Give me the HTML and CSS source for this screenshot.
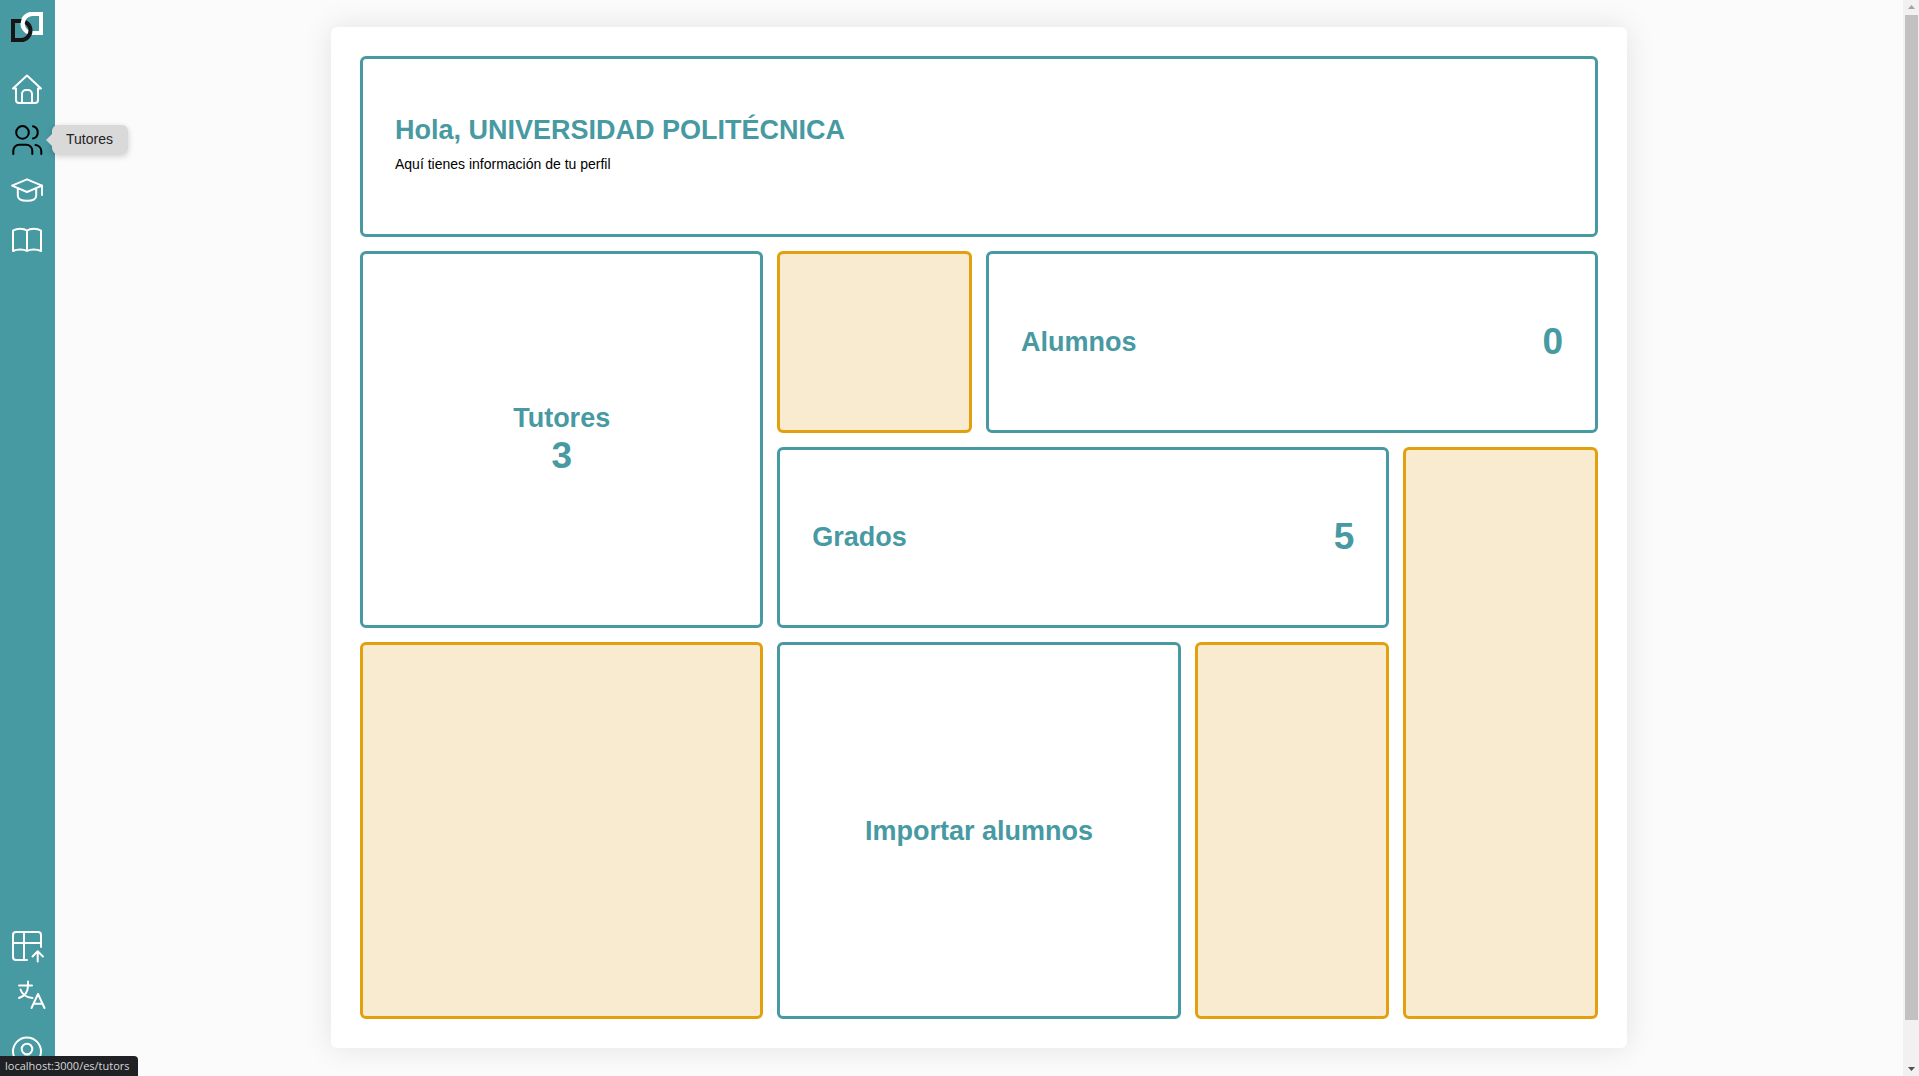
FILE: index.html
```html
<!DOCTYPE html>
<html lang="es">
<head>
    <meta charset="UTF-8">
    <meta name="viewport" content="width=device-width, initial-scale=1.0">
    <title>Perfil</title>
    <link rel="stylesheet" href="styles.css">
</head>
<body>
    <nav class="sidebar">
        <a class="logo" href="/es" aria-label="Inicio">
            <svg class="icon" viewBox="0 0 32 32">
                <path d="M30 3H21a9.500 9.500 0 0 0 0 19h9z" stroke="#fff" stroke-width="4"/>
                <path d="M2 10h8a9.500 9.500 0 0 1 0 19H2z" stroke="#161616" stroke-width="4"/>
                <path d="M21 3a9.500 9.500 0 0 0-8.500 13" stroke="#fff" stroke-width="4"/>
            </svg>
        </a>

        <div class="menu">
            <a href="/es/home" aria-label="Inicio">
                <svg class="icon" viewBox="0 0 32 32">
                    <path d="M2 14.500 16 1.500l14 13M2 14.500h3V26a3 3 0 0 0 3 3h16a3 3 0 0 0 3-3V14.500h3"/>
                    <path d="M11 29v-9a4 4 0 0 1 4-4h2a4 4 0 0 1 4 4v9"/>
                </svg>
            </a>
            <a class="active" href="/es/tutors" aria-label="Tutores">
                <svg class="icon" viewBox="0 0 32 32">
                    <circle cx="11.500" cy="8.400" r="6.300"/>
                    <path d="M22 2.300a6.300 6.300 0 0 1 0 12.200M2.300 30v-3.200a6 6 0 0 1 6-6h7a6 6 0 0 1 6 6V30M24.500 21a6.500 6.500 0 0 1 5.800 6.500V30"/>
                </svg>
                <span class="tooltip">Tutores</span>
            </a>
            <a href="/es/students" aria-label="Alumnos">
                <svg class="icon" viewBox="0 0 32 32">
                    <path d="M16 5.300 31 11.600 16 18 1 11.600zM31 11.600V21M6.800 14v7.500c0 3.500 4 5.300 9.200 5.300s9.200-1.800 9.200-5.300V14"/>
                </svg>
            </a>
            <a href="/es/degrees" aria-label="Grados">
                <svg class="icon" viewBox="0 0 32 32">
                    <path d="M16 6.500C12.500 4.200 6 4.200 2 6.500V27c4-2 10.500-2 14 0 3.500-2 10-2 14 0V6.500c-4-2.300-10.500-2.300-14 0zM16 6.500V27"/>
                </svg>
            </a>
        </div>

        <div class="menu menu-bottom">
            <a href="/es/import" aria-label="Importar">
                <svg class="icon" viewBox="0 0 32 32">
                    <path d="M16 29H5a3 3 0 0 1-3-3V4a3 3 0 0 1 3-3h22a3 3 0 0 1 3 3v12M2 12h28M13 1v28"/>
                    <path d="M26.700 30.500v-10M21.500 25.500l5.200-5.200 5.200 5.200"/>
                </svg>
            </a>
            <a href="/es/language" aria-label="Idioma">
                <svg class="icon" viewBox="0 0 32 32">
                    <path d="M8 4.500h13M17 .500v4c0 6-3 10.500-9 12.500M9.500 8.500c1.500 4.500 5.500 8 12 8.500"/>
                    <path d="m20.500 27 6.500-14 6.500 14M22.500 22.800h9"/>
                </svg>
            </a>
            <a class="account" href="/es/profile" aria-label="Perfil">
                <svg class="icon" viewBox="0 0 32 32">
                    <circle cx="16" cy="16.500" r="14"/>
                    <circle cx="16" cy="14" r="5.300"/>
                    <path d="M7 27c1-4 4.500-5.500 9-5.500s8 1.500 9 5.500"/>
                </svg>
            </a>
        </div>
    </nav>

    <main class="content">
        <div class="panel">
            <section class="box welcome">
                <h1>Hola, UNIVERSIDAD POLITÉCNICA</h1>
                <p>Aquí tienes información de tu perfil</p>
            </section>
            <section class="box tutors">
                <h2>Tutores</h2>
                <span class="number">3</span>
            </section>
            <div class="box filler filler-small"></div>
            <section class="box row students">
                <h2>Alumnos</h2>
                <span class="number">0</span>
            </section>
            <section class="box row degrees">
                <h2>Grados</h2>
                <span class="number">5</span>
            </section>
            <div class="box filler filler-tall"></div>
            <div class="box filler filler-big"></div>
            <button class="box import" type="button">Importar alumnos</button>
            <div class="box filler"></div>
        </div>
    </main>

    <div class="scrollbar">
        <svg viewBox="0 0 16 15"><path d="M5 9h7L8.500 5z" fill="#a3a3a3"/></svg>
        <div class="thumb"></div>
        <svg viewBox="0 0 16 15"><path d="M5 6h7l-3.500 4z" fill="#505050"/></svg>
    </div>

    <div class="status">localhost:3000/es/tutors</div>
</body>
</html>
```

FILE: styles.css
```css
* {
    box-sizing: border-box;
}

body {
    display: flex;
    min-height: 100vh;
    margin: 0;
    background-color: #fbfbfb;
    color: #000;
    font-family: "Liberation Sans", Arial, sans-serif;
    font-size: 14px;
}

h1,
h2,
p {
    margin: 0;
}

/* Sidebar */
.sidebar {
    position: sticky;
    top: 0;
    display: flex;
    flex-direction: column;
    flex-shrink: 0;
    align-items: flex-start;
    width: 55px;
    height: 100vh;
    padding: 11px 12px 9px 11px;
    background-color: #4799a2;
}

.sidebar a {
    position: relative;
    display: block;
    height: 32px;
    color: #fff;
}

.sidebar a.active {
    color: #000;
}

.icon {
    display: block;
    width: 32px;
    height: 32px;
    overflow: visible;
    fill: none;
    stroke: currentColor;
    stroke-width: 2;
}

.menu {
    display: flex;
    flex-direction: column;
    gap: 18px;
    margin-top: 31px;
}

.menu .icon {
    stroke-linecap: round;
    stroke-linejoin: round;
}

.menu-bottom {
    margin-top: auto;
}

.account {
    margin-top: 4px;
}

.tooltip {
    position: absolute;
    top: 1px;
    left: 41px;
    z-index: 10;
    padding: 0 15px 0 14px;
    border-radius: 6px;
    background-color: #d9d9d9;
    box-shadow: 0 2px 6px rgba(0, 0, 0, 0.2);
    color: #222;
    line-height: 29px;
}

.tooltip::before {
    content: "";
    position: absolute;
    top: 9px;
    left: -6px;
    border: 6px solid transparent;
    border-left: 0;
    border-right-color: #d9d9d9;
}

/* Profile grid */
.content {
    display: flex;
    flex: 1;
    justify-content: center;
    padding: 27px 32px 28px;
}

.panel {
    display: grid;
    grid-template-columns: repeat(6, 1fr);
    grid-template-rows: repeat(5, minmax(160px, 1fr));
    gap: 14px;
    width: 100%;
    max-width: 1296px;
    padding: 29px;
    border-radius: 6px;
    background-color: #fff;
    box-shadow: 0 0 30px rgba(0, 0, 0, 0.1);
}

.box {
    display: flex;
    flex-direction: column;
    align-items: center;
    justify-content: center;
    padding: 0 32px;
    border: 3px solid #4799a2;
    border-radius: 6px;
    background-color: #fff;
    color: #4799a2;
}

.box h1,
.box h2,
.import {
    font-family: inherit;
    font-size: 27px;
    font-weight: bold;
    line-height: 32px;
}

.number {
    font-size: 37px;
    font-weight: bold;
    line-height: 44px;
}

.welcome {
    grid-column: span 6;
    align-items: flex-start;
    gap: 10px;
    padding-bottom: 8px;
}

.welcome p {
    color: #000;
    line-height: 16px;
}

.tutors,
.filler-big,
.import {
    grid-column: span 2;
    grid-row: span 2;
}

.row {
    grid-column: span 3;
    flex-direction: row;
    justify-content: space-between;
}

.import {
    cursor: pointer;
}

.filler {
    grid-row: span 2;
    border-color: #e2a00f;
    background-color: #f8ebcf;
}

.filler-small {
    grid-row: span 1;
}

.filler-tall {
    grid-row: span 3;
}

/* Scrollbar */
.scrollbar {
    position: sticky;
    top: 0;
    display: flex;
    flex-direction: column;
    flex-shrink: 0;
    width: 16px;
    height: 100vh;
    background-color: #f1f1f1;
}

.scrollbar svg {
    display: block;
    height: 15px;
}

.thumb {
    flex: 1;
    margin: 0 1px 41px 2px;
    background-color: #c1c1c1;
}

/* Link preview */
.status {
    position: fixed;
    bottom: 0;
    left: 0;
    z-index: 20;
    padding: 0 8px 0 5px;
    border-top-right-radius: 4px;
    background-color: #202124;
    color: #d5d7da;
    font-family: "Open Sans", "Noto Sans", sans-serif;
    font-size: 11px;
    line-height: 20px;
}
```
